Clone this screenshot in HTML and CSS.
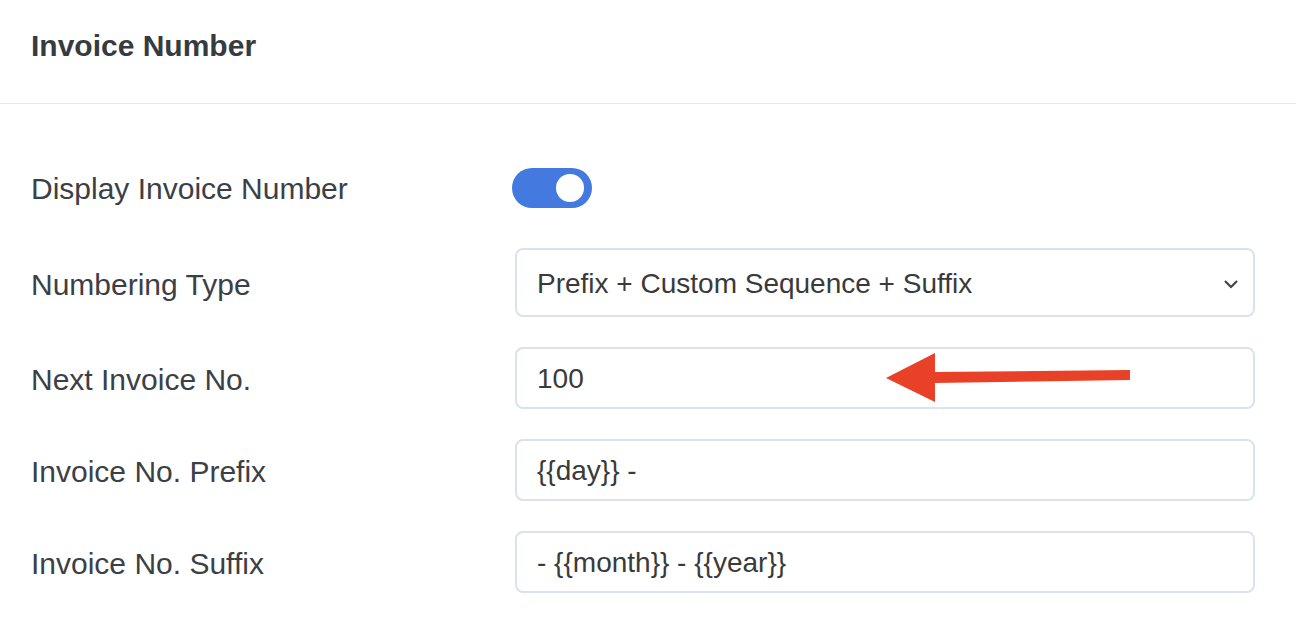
FILE: index.html
```html
<!DOCTYPE html>
<html>
<head>
<meta charset="utf-8">
<link rel="stylesheet" href="styles.css">
</head>
<body>
<div class="card">
  <div class="card-header">Invoice Number</div>
  <div class="card-body">
    <div class="row">
      <div class="label">Display Invoice Number</div>
      <div class="control"><span class="toggle"><span class="knob"></span></span></div>
    </div>
    <div class="row">
      <div class="label">Numbering Type</div>
      <div class="control">
        <div class="field select">
          <span>Prefix + Custom Sequence + Suffix</span>
          <svg class="chev" width="16" height="10" viewBox="0 0 16 10"><path d="M2 2 L8 8 L14 2" fill="none" stroke="#454545" stroke-width="2.2"/></svg>
        </div>
      </div>
    </div>
    <div class="row">
      <div class="label">Next Invoice No.</div>
      <div class="control"><div class="field">100</div></div>
    </div>
    <div class="row">
      <div class="label">Invoice No. Prefix</div>
      <div class="control"><div class="field">{{day}} -</div></div>
    </div>
    <div class="row">
      <div class="label">Invoice No. Suffix</div>
      <div class="control"><div class="field">- {{month}} - {{year}}</div></div>
    </div>
  </div>
  <svg class="arrow" width="260" height="60" viewBox="0 0 260 60">
    <polygon points="0,26 49,1 49,20 244,18 244,28 49,31 49,50" fill="#e84127"/>
  </svg>
</div>
</body>
</html>
```
FILE: styles.css
```css
html, body {
  margin: 0;
  padding: 0;
  background: #fff;
}
body {
  font-family: "Liberation Sans", Arial, sans-serif;
  color: #3b4046;
}
.card {
  position: relative;
  width: 1296px;
  height: 630px;
}
.card-header {
  height: 104px;
  box-sizing: border-box;
  border-bottom: 1px solid #e8e8e8;
  padding: 29px 31px 0;
  font-size: 30px;
  font-weight: bold;
  color: #363b41;
}
.card-body {
  padding: 52px 41px 0 31px;
  display: flex;
  flex-direction: column;
  gap: 30px;
}
.row {
  display: flex;
  align-items: center;
  min-height: 62px;
}
.label {
  width: 484px;
  padding-top: 4px;
  font-size: 30px;
  color: #3b4046;
}
.control {
  flex: 1;
  display: flex;
  align-items: center;
}
.toggle {
  display: block;
  width: 80px;
  height: 40px;
  margin-left: -3px;
  margin-top: 2px;
  border-radius: 20px;
  background: #447ae0;
  position: relative;
}
.knob {
  position: absolute;
  top: 6px;
  right: 8px;
  width: 28px;
  height: 28px;
  border-radius: 50%;
  background: #fff;
}
.field {
  flex: 1;
  box-sizing: border-box;
  height: 62px;
  border: 2px solid #d9e2ee;
  border-radius: 8px;
  padding: 2px 20px 0;
  display: flex;
  align-items: center;
  font-size: 28px;
  color: #3a3a3a;
}
.field.select {
  height: 69px;
  justify-content: space-between;
  padding-right: 14px;
}
.chev {
  display: block;
}
.arrow {
  position: absolute;
  left: 886px;
  top: 352px;
}
```
